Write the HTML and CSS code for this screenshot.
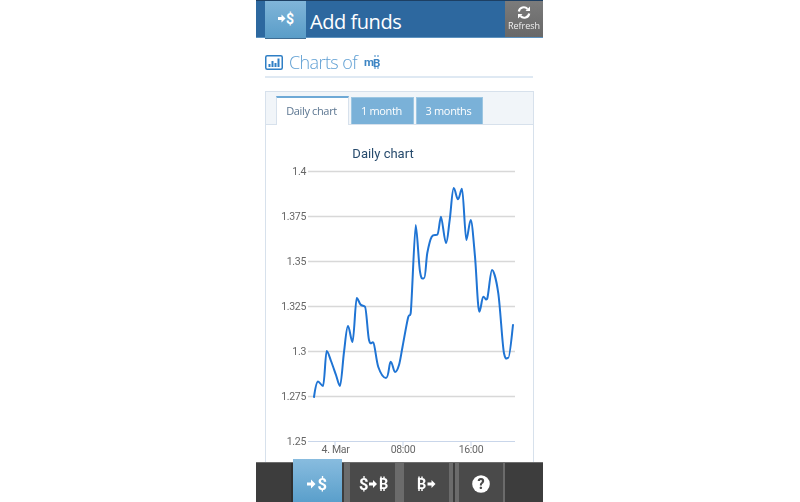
FILE: index.html
```html
<!DOCTYPE html>
<html lang="en">
<head>
<meta charset="utf-8">
<title>Add funds</title>
<link rel="stylesheet" href="styles.css">
</head>
<body>
<div class="app">
  <header class="topbar">
    <div class="back-btn">
      <svg width="16" height="15" viewBox="0 0 16 15"><path class="glyph" d="M0 6h3.500V3.500l4 4-4 4V9H0z"/><text class="glyph sym-sm" x="8" y="12.500">$</text></svg>
    </div>
    <h1 class="title">Add funds</h1>
    <div class="refresh">
      <svg width="14" height="13" viewBox="0 0 14 13"><path class="refresh-arc" d="M1.800 5.500A5 5 0 0 1 10.500 3M12.200 7.500A5 5 0 0 1 3.500 10"/><path class="refresh-tip" d="M13 0.500v4.500h-4.500zM1 12.500V8h4.500z"/></svg>
      <span class="refresh-label">Refresh</span>
    </div>
  </header>
  <main class="content">
    <div class="heading">
      <svg class="chart-icon" width="18" height="15" viewBox="0 0 18 15"><rect x="0.750" y="0.750" width="16.500" height="13.500" rx="1.500"/><path class="bars" d="M4.500 12V9M7.500 12V6M10.500 12V8M13.500 12V3.500"/></svg>
      <span class="heading-text">Charts of</span>
      <svg class="mb-icon" width="18" height="16" viewBox="0 0 18 16"><text class="mb-text" x="0" y="12">m</text><text class="mb-text" x="9" y="12.500">B</text><path class="mb-ticks" d="M11 1v2M14 1v2M11 13v2M14 13v2"/></svg>
    </div>
    <section class="panel">
      <nav class="tabs">
        <span class="tab active">Daily chart</span>
        <span class="tab month1">1 month</span>
        <span class="tab month3">3 months</span>
      </nav>
      <svg class="chart" width="267" height="370" viewBox="266 125 267 370">
        <text class="chart-title" x="383" y="158">Daily chart</text>
        <g class="grid">
          <path d="M308 171.500H515M308 216.500H515M308 261.500H515M308 306.500H515M308 351.500H515M308 396.500H515"/>
        </g>
        <path class="axis" d="M308 441.500H515M335 441V446M403 441V446M471 441V446"/>
        <g class="ylab">
          <text x="306" y="175">1.4</text>
          <text x="306" y="220">1.375</text>
          <text x="306" y="265">1.35</text>
          <text x="306" y="310">1.325</text>
          <text x="306" y="355">1.3</text>
          <text x="306" y="400">1.275</text>
          <text x="306" y="445">1.25</text>
        </g>
        <g class="xlab">
          <text x="335.500" y="453">4. Mar</text>
          <text x="403" y="453">08:00</text>
          <text x="471" y="453">16:00</text>
        </g>
        <path class="line" d="M314 397C315 390 316.500 381.500 318 381.500S321.500 386 323 386S325.400 351 326.700 351S329.450 357 331 361S334.500 370.800 336 375S338.700 386 340 386S342.700 362 344 352S346.500 326 348 326S351 342 352.500 342S355.400 298 356.700 298S359.100 303 360.500 304.500S363.600 305.500 365 306.700S367.600 334 369 340S371.800 341.500 373.300 342.500S376.200 361 378.300 367S383 378 386 378S389 361.700 390.700 361.700S393.500 372 395 372S397.750 369.200 399 365S401 354.800 402.500 347S406.600 323.700 408 318S409.700 318 410.700 313S414.500 225 415.700 225S418.600 262.800 420 271.700S422.300 278.300 424 278.300S426 259.900 427.300 253S430 239.700 431.700 236.700S435.700 235.500 437.300 234.700S439.800 216.700 441 216.700S444.500 243.300 446 243.300S448.400 229.200 449.700 220S452.200 188 453.700 188S456.500 199.300 458 199.300S460.600 188.700 462 188.700S465 240 466.300 240S469.300 220 470.700 220S473.600 241.400 475 256.700S477.800 311.700 479.300 311.700S481.800 297 483.300 296.700S486 302 487.300 298.300S490.400 270 492 270S496.300 279.300 498.300 293.300S502.300 345 504 353.300S506.800 357.700 508.300 357.700S511.800 335 513 325"/>
      </svg>
    </section>
  </main>
  <footer class="bottombar">
    <div class="slot-first"></div>
    <div class="fbtn fbtn-active">
      <svg width="21" height="18" viewBox="0 0 21 18"><path class="glyph" d="M0 7.500h4V4.500l4.500 4.500-4.500 4.500V10.500H0z"/><text class="glyph sym" x="10.500" y="15">$</text></svg>
    </div>
    <div class="gap gap-a"></div>
    <div class="fbtn fbtn-b">
      <svg class="icon-b" width="30" height="18" viewBox="0 0 30 18"><text class="glyph sym" x="0" y="15">$</text><path class="glyph" d="M10 7.500h4V5l4 4-4 4v-2.500h-4z"/><text class="glyph sym-b" x="20" y="14">B</text><path class="ticks" d="M22 1.500v2M25 1.500v2M22 14v2M25 14v2"/></svg>
    </div>
    <div class="gap gap-b"></div>
    <div class="fbtn fbtn-c">
      <svg width="19" height="18" viewBox="0 0 19 18"><text class="glyph sym-b" x="0" y="14">B</text><path class="ticks" d="M2 1.500v2M5 1.500v2M2 14v2M5 14v2"/><path class="glyph" d="M10.500 7.500h4V5l4 4-4 4v-2.500h-4z"/></svg>
    </div>
    <div class="gap gap-c"></div>
    <div class="fbtn fbtn-d">
      <svg width="18" height="18" viewBox="0 0 18 18"><circle class="glyph" cx="9" cy="9" r="8.800"/><text class="qmark" x="9" y="14">?</text></svg>
    </div>
    <div class="gap gap-d"></div>
  </footer>
</div>
</body>
</html>
```
FILE: styles.css
```css
* { box-sizing: border-box; }
html, body { margin: 0; padding: 0; background: #fff; }
body { width: 800px; height: 502px; overflow: hidden; font-family: "Open Sans", "Noto Sans", sans-serif; }
.app { width: 287px; height: 502px; margin-left: 256px; display: flex; flex-direction: column; overflow: hidden; filter: blur(0.35px); }

.topbar { flex: 0 0 38px; height: 38px; display: flex; align-items: stretch; background: #2d689f; border-top: 1px solid #1d3f63; border-bottom: 1px solid #5d93c0; padding-left: 9px; }
.back-btn { width: 41px; height: 38px; display: flex; align-items: center; justify-content: center; background: linear-gradient(#80b5d9, #5a9dc8); border-bottom: 1px solid #3f6d93; padding-bottom: 2px; }
.title { margin: 0 0 0 4px; flex: 1; font-size: 20px; letter-spacing: -0.45px; font-weight: 400; line-height: 41px; color: #fff; white-space: nowrap; }
.refresh { width: 38px; display: flex; flex-direction: column; align-items: center; padding-top: 5px; background: linear-gradient(#7b7b7b, #686868); }
.refresh-arc { fill: none; stroke: #fff; stroke-width: 2.200; }
.refresh-tip { fill: #fff; }
.refresh-label { font-size: 9px; line-height: 12px; margin-top: 1px; color: #f0f0f0; }
.glyph { fill: #fff; }
.sym { font-family: "Roboto", sans-serif; font-weight: 700; font-size: 16.500px; }
.sym-sm { font-family: "Roboto", sans-serif; font-weight: 700; font-size: 14px; }
.sym-b { font-family: "Roboto", sans-serif; font-weight: 700; font-size: 14.500px; }
.ticks { stroke: #fff; stroke-width: 1.500; fill: none; }

.content { flex: 1; min-height: 0; overflow: hidden; padding: 0 10px 0 9px; }
.heading { height: 40px; display: flex; align-items: center; gap: 6px; border-bottom: 2px solid #dfe9f3; padding-top: 12px; padding-bottom: 2px; }
.chart-icon { fill: none; stroke: #2f7fc5; stroke-width: 1.500; }
.bars { stroke-width: 2; stroke: #2f7fc5; }
.heading-text { font-size: 18px; font-weight: 300; letter-spacing: -0.6px; color: #5f9fd3; line-height: 22px; }
.mb-icon { margin-left: 1px; }
.mb-text { font-family: "Roboto", sans-serif; font-weight: 700; font-size: 11.500px; fill: #3d85c4; }
.mb-ticks { stroke: #3d85c4; stroke-width: 1; }

.panel { margin-top: 13px; width: 269px; border: 1px solid #d7e1ec; border-bottom: 0; }
.tabs { height: 33px; display: flex; align-items: flex-end; gap: 2px; padding-left: 10px; background: #f1f5f9; border-bottom: 1px solid #d7e1ec; }
.tab { display: flex; align-items: center; justify-content: center; font-size: 11px; letter-spacing: -0.35px; height: 27px; padding: 0 2px 2px 0; color: #fff; background: #7ab1d8; border: 1px solid #9cc6e2; border-bottom: 0; }
.tab.active { width: 73px; height: 29px; margin-bottom: -1px; background: #fff; color: #5c7691; border: 1px solid #d7e1ec; border-top: 2px solid #6ea9d6; border-bottom: 0; }
.month1 { width: 63px; }
.month3 { width: 67px; }
.chart { display: block; }
.chart-title { font-family: "Roboto", sans-serif; font-size: 13px; fill: #274b6d; text-anchor: middle; }
.grid path { stroke: #d8d8d8; stroke-width: 1.500; fill: none; }
.axis { stroke: #c9d6ea; stroke-width: 1; fill: none; }
.ylab text { font-family: "Roboto", sans-serif; font-size: 10.500px; letter-spacing: -0.3px; fill: #666; text-anchor: end; }
.xlab text { font-family: "Roboto", sans-serif; font-size: 10.500px; letter-spacing: -0.3px; fill: #666; text-anchor: middle; }
.line { fill: none; stroke: #1f74d4; stroke-width: 2; stroke-linejoin: round; stroke-linecap: round; }

.bottombar { flex: 0 0 40px; height: 40px; display: flex; align-items: stretch; background: #3d3d3d; border-top: 1px solid #6e6e6e; position: relative; }
.slot-first { width: 37px; border-right: 2px solid #2f2f2f; }
.fbtn { display: flex; align-items: center; justify-content: center; background: #4a4a4a; padding-top: 2px; }
.fbtn-active { width: 49px; margin-top: -4px; padding-top: 6px; background: linear-gradient(#88bcdf, #5a9fcb); }
.fbtn-b { width: 45px; }
.icon-b { margin-left: 3px; }
.fbtn-c { width: 45px; }
.fbtn-d { width: 44px; }
.gap { background: #6b6b6b; }
.gap-a { width: 8px; border-left: 2px solid #3d3d3d; }
.gap-b { width: 9px; }
.gap-c { width: 10px; background: linear-gradient(90deg, #6b6b6b 40%, #3d3d3d 40%, #3d3d3d 60%, #6b6b6b 60%); }
.gap-d { width: 2px; }
.qmark { font-family: "Roboto", sans-serif; font-weight: 900; font-size: 14px; fill: #4a4a4a; text-anchor: middle; }
```
